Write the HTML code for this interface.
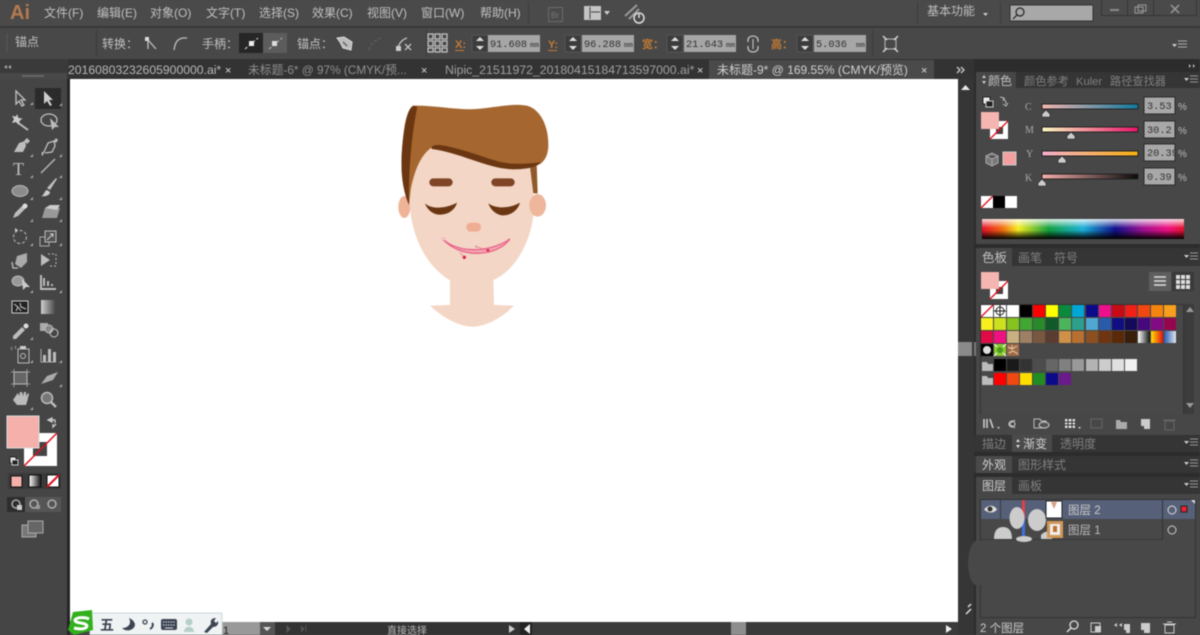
<!DOCTYPE html>
<html><head><meta charset="utf-8">
<style>
html,body{margin:0;padding:0;width:1200px;height:635px;overflow:hidden;background:#464646}
svg{display:block;filter:blur(.4px)}
text{font-family:"Liberation Sans","Noto Sans CJK SC",sans-serif;font-size:12px;fill:#c0c0c0}
.m{font-family:"Liberation Mono","Noto Sans CJK SC",monospace;font-size:10.300px;fill:#333}
.o{fill:#c07a34;font-size:11px;font-weight:bold}
.d{fill:#808080;font-size:11.200px}
.i{fill:none;stroke:#c0c0c0;stroke-width:1.300}
.f{fill:#bdbdbd}
.s{width:12px;height:12px}
</style></head><body>
<svg width="1200" height="635" viewBox="0 0 1200 635" xmlns="http://www.w3.org/2000/svg">
<defs>
<linearGradient id="gc"><stop offset="0" stop-color="#f5b5b0"/><stop offset="1" stop-color="#0f7a9e"/></linearGradient>
<linearGradient id="gm"><stop offset="0" stop-color="#fafac0"/><stop offset="1" stop-color="#e8146a"/></linearGradient>
<linearGradient id="gy"><stop offset="0" stop-color="#f5b0d0"/><stop offset="1" stop-color="#f8b010"/></linearGradient>
<linearGradient id="gk"><stop offset="0" stop-color="#f5b0ac"/><stop offset="1" stop-color="#0a0a0a"/></linearGradient>
<linearGradient id="sp"><stop offset="0" stop-color="#e8102a"/><stop offset=".1" stop-color="#f06a10"/><stop offset=".18" stop-color="#f5ec20"/><stop offset=".33" stop-color="#12a040"/><stop offset=".5" stop-color="#1ab0d8"/><stop offset=".66" stop-color="#10108c"/><stop offset=".8" stop-color="#a01090"/><stop offset=".92" stop-color="#ee1080"/><stop offset="1" stop-color="#e8102a"/></linearGradient>
<linearGradient id="sw" x2="0" y2="1"><stop offset="0" stop-color="#fff" stop-opacity=".85"/><stop offset=".45" stop-color="#fff" stop-opacity="0"/><stop offset=".55" stop-color="#000" stop-opacity="0"/><stop offset="1" stop-color="#000"/></linearGradient>
<linearGradient id="g1"><stop offset="0" stop-color="#fff"/><stop offset="1" stop-color="#111"/></linearGradient>
<linearGradient id="g2"><stop offset="0" stop-color="#ffe000"/><stop offset="1" stop-color="#e81010"/></linearGradient>
<linearGradient id="g3"><stop offset="0" stop-color="#2a5ab0"/><stop offset="1" stop-color="#e0e8f0"/></linearGradient>
</defs>

<!-- base regions -->
<rect width="1200" height="635" fill="#464646"/>
<rect x="0" y="0" width="1200" height="26" fill="#4a4a4a"/>
<rect x="0" y="26" width="1200" height="2" fill="#383838"/>
<rect x="0" y="28" width="1200" height="31" fill="#484848"/>
<rect x="0" y="59" width="1200" height="20" fill="#333"/>
<rect x="0" y="59" width="68" height="20" fill="#3a3a3a"/>
<rect x="0" y="79" width="67" height="556" fill="#454545"/>
<rect x="67" y="79" width="3" height="556" fill="#242424"/>
<rect x="958" y="79" width="16" height="556" fill="#333"/>
<rect x="974" y="59" width="226" height="576" fill="#2c2c2c"/>

<!-- canvas -->
<rect x="70" y="79" width="888" height="543" fill="#fff"/>

<!-- menu -->
<text x="10" y="19" style="font-size:20px;font-weight:bold;fill:#b57a4c">Ai</text>
<text x="44" y="17">文件(F)</text><text x="97" y="17">编辑(E)</text><text x="150" y="17">对象(O)</text><text x="206" y="17">文字(T)</text><text x="259" y="17">选择(S)</text><text x="312" y="17">效果(C)</text><text x="367" y="17">视图(V)</text><text x="421" y="17">窗口(W)</text><text x="480" y="17">帮助(H)</text>
<rect x="528" y="2" width="1" height="22" fill="#3c3c3c"/>
<rect x="548.500" y="7.500" width="14" height="14" fill="none" stroke="#6a6a6a"/>
<text x="551" y="18" style="font-size:8px;fill:#777">Br</text>
<rect x="584" y="6" width="17" height="14" fill="#c4c4c4"/><path d="M590 7v12M591 12h9" stroke="#444" fill="none"/><path d="M604 11h6l-3 4z" fill="#ccc"/>
<path d="M625 16l12-11M629 19l10-10" stroke="#999" stroke-width="2" fill="none"/><circle cx="639" cy="18" r="5" fill="none" stroke="#ddd" stroke-width="1.500"/><path d="M639 14v4" stroke="#ddd" stroke-width="1.500"/>
<rect x="917" y="2" width="1" height="22" fill="#3c3c3c"/><rect x="1000" y="2" width="1" height="22" fill="#3c3c3c"/>
<text x="927" y="15">基本功能</text><path d="M983 13h5l-2.500 3z" fill="#ccc"/>
<rect x="1010" y="5" width="83" height="16" fill="#a8a8a8" stroke="#333"/>
<circle cx="1020" cy="12" r="4" fill="none" stroke="#222" stroke-width="1.200"/><path d="M1017 15l-4 4" stroke="#222" stroke-width="1.200"/>
<path d="M1101.500 0v15.500h95V0M1127.500 0v15.500M1153.500 0v15.500" fill="none" stroke="#353535"/>
<rect x="1110" y="9" width="9" height="2" fill="#8a8a8a"/>
<rect x="1135" y="7" width="8" height="6" fill="none" stroke="#999"/><rect x="1138" y="5" width="8" height="6" fill="none" stroke="#999"/>
<path d="M1171 5l8 8M1179 5l-8 8" stroke="#999" stroke-width="1.500"/>

<!-- control bar -->
<path d="M7 34v18" stroke="#6a6a6a" stroke-dasharray="1 1"/>
<rect x="96" y="30" width="1" height="27" fill="#3a3a3a"/>
<text x="15" y="46">锚点</text>
<text x="102" y="48">转换：</text>
<rect x="145" y="37" width="4" height="4" fill="#ddd"/><path d="M149 41l7 8M148 41v8" class="i"/>
<path d="M174 50c1-7 3-11 9-12h4" class="i" stroke-width="2"/>
<text x="202" y="48">手柄：</text>
<rect x="239" y="33" width="24" height="20" fill="#262626"/><rect x="263" y="33" width="24" height="20" fill="#5c5c5c"/>
<path d="M245 49l13-11" stroke="#ddd" stroke-dasharray="3 2"/><rect x="249" y="41" width="5" height="5" fill="#eee"/>
<path d="M269 49l13-11" stroke="#bbb" stroke-dasharray="3 2"/><rect x="272" y="41" width="5" height="5" fill="#ddd"/>
<text x="297" y="48">锚点：</text>
<path d="M337 38l7-1 8 5-1 8-8-2-3-6z" fill="#bbb" stroke="#ddd"/><path d="M343 42l4 4" stroke="#444"/>
<path d="M369 50c2-6 6-10 12-12" fill="none" stroke="#666" stroke-dasharray="3 2"/>
<path d="M398 48c1-5 5-9 9-10" class="i"/><rect x="396" y="46" width="5" height="5" fill="#ccc"/><path d="M405 44l6 6M411 44l-6 6" class="i"/>
<rect x="426" y="30" width="1" height="27" fill="#3a3a3a"/>
<g class="i"><rect x="428" y="34" width="5" height="5"/><rect x="435" y="34" width="5" height="5"/><rect x="442" y="34" width="5" height="5"/><rect x="428" y="41" width="5" height="5"/><rect x="435" y="41" width="5" height="5"/><rect x="442" y="41" width="5" height="5"/><rect x="428" y="48" width="5" height="4"/><rect x="435" y="48" width="5" height="4"/><rect x="442" y="48" width="5" height="4"/></g>
<text x="455" y="48" class="o">X:</text><rect x="455" y="50" width="9" height="1" fill="#c07a34"/>
<rect x="472" y="35" width="16" height="17" fill="#3c3c3c" stroke="#555"/><path d="M476 41l4-4 4 4zM476 46l4 4 4-4z" fill="#ddd"/>
<rect x="488" y="35" width="52" height="17" fill="#a6a6a6"/><text x="490" y="47" class="m">91.608</text><text x="530" y="47" class="m" style="font-size:7.500px">mm</text>
<text x="548" y="48" class="o">Y:</text><rect x="548" y="50" width="9" height="1" fill="#c07a34"/>
<rect x="565" y="35" width="16" height="17" fill="#3c3c3c" stroke="#555"/><path d="M569 41l4-4 4 4zM569 46l4 4 4-4z" fill="#ddd"/>
<rect x="582" y="35" width="52" height="17" fill="#a6a6a6"/><text x="584" y="47" class="m">96.288</text><text x="624" y="47" class="m" style="font-size:7.500px">mm</text>
<text x="642" y="48" class="o">宽：</text>
<rect x="667" y="35" width="16" height="17" fill="#3c3c3c" stroke="#555"/><path d="M671 41l4-4 4 4zM671 46l4 4 4-4z" fill="#ddd"/>
<rect x="684" y="35" width="52" height="17" fill="#a6a6a6"/><text x="686" y="47" class="m">21.643</text><text x="726" y="47" class="m" style="font-size:7.500px">mm</text>
<path d="M748 42v-2a5 4 0 0 1 10 0v2M748 46v2a5 4 0 0 0 10 0v-2" class="i" stroke-width="1.700"/><path d="M753 39v10" stroke="#ccc"/>
<text x="771" y="48" class="o">高：</text>
<rect x="797" y="35" width="16" height="17" fill="#3c3c3c" stroke="#555"/><path d="M801 41l4-4 4 4zM801 46l4 4 4-4z" fill="#ddd"/>
<rect x="814" y="35" width="52" height="17" fill="#a6a6a6"/><text x="816" y="47" class="m">5.036</text><text x="856" y="47" class="m" style="font-size:7.500px">mm</text>
<rect x="872" y="30" width="1" height="27" fill="#3a3a3a"/>
<rect x="885" y="39" width="11" height="10" fill="none" stroke="#bbb"/><path d="M883 36l4 4M898 36l-4 4M883 52l4-4M898 52l-4-4" stroke="#ddd" stroke-width="1.300"/>
<path d="M1172 44h5l-2.500 3z" fill="#ccc"/><path d="M1178 41h9M1178 44h9M1178 47h9" stroke="#aaa"/>

<!-- tabs -->
<path d="M7 65l-3 2 3 2zM11 65l-3 2 3 2z" fill="#aaa"/>
<rect x="0" y="73" width="67" height="6" fill="#484848"/><rect x="22" y="75" width="22" height="2" fill="#666"/>
<text x="68" y="74" style="font-size:12.200px;fill:#b8b8b8">20160803232605900000.ai*</text><text x="225" y="74" style="font-size:11px;fill:#ddd">×</text>
<text x="248" y="74" style="font-size:11.800px;fill:#909090">未标题-6* @ 97% (CMYK/预...</text><text x="421" y="74" style="font-size:11px;fill:#ddd">×</text>
<text x="445" y="74" style="font-size:12.300px;fill:#a0a0a0">Nipic_21511972_20180415184713597000.ai*</text><text x="697" y="74" style="font-size:11px;fill:#ddd">×</text>
<rect x="709" y="60" width="225" height="19" fill="#4a4a4a"/>
<text x="717" y="74" style="font-size:12px;fill:#d0d0d0">未标题-9* @ 169.55% (CMYK/预览)</text><text x="921" y="74" style="font-size:11px;fill:#ddd">×</text>
<path d="M957 67l3 3-3 3M961 67l3 3-3 3" fill="none" stroke="#ccc" stroke-width="1.300"/>
<path d="M1189 64l2 2-2 2zM1193 64l2 2-2 2z" fill="#bbb"/>

<!-- toolbar icons -->
<rect x="35" y="88" width="26" height="21" fill="#2b2b2b"/>
<path d="M16 91v13l3-3 3 5 2-1-3-5h4z" class="i"/>
<path d="M44 91v13l3-3 3 5 2-1-3-5h4z" fill="#ccc"/>
<path d="M17 122l11 8" stroke="#bbb" stroke-width="2"/><path d="M17 114l1.500 4 4 .5-3 2.500-.5 4-3-3-4 1 2-4-2-3 4 .5z" fill="#ccc"/>
<ellipse cx="49" cy="120" rx="8" ry="6" class="i" stroke-width="2"/><path d="M50 118l2 12 3-3 4 0z" fill="#bbb"/>
<path d="M14 152l5-9 6-2 1 5-3 6z" class="f"/><path d="M24 141l3-3 3 3-3 3z" class="f"/>
<path d="M42 152c2 4-2 4 2 0l4-9 6-2 1 5-3 6-7 1" class="i"/><path d="M54 141l2-3 2 2-2 3z" class="f"/>
<text x="13" y="175" style="font-family:'Liberation Serif',serif;font-size:18px;fill:#c0c0c0">T</text>
<path d="M41 173l14-14" stroke="#bbb" stroke-width="1.300"/>
<ellipse cx="20" cy="191" rx="8" ry="5.500" fill="#8c8c8c" stroke="#bbb"/>
<path d="M47 188l9-10 1 1-7 11z" class="f"/><path d="M41 196c3 0 3-5 6-6l3 2c0 3-4 5-9 4z" fill="#ccc"/>
<path d="M13 218l2-5 9-9 3 3-9 9z" class="f"/><circle cx="25" cy="206" r="2.500" fill="#ddd"/>
<path d="M42 218l3-10h9l6 0-3 10z" fill="#999"/><path d="M45 208l5-3 10 0-3 5" fill="#ccc"/>
<circle cx="20" cy="237" r="6.500" fill="none" stroke="#bbb" stroke-dasharray="3 2"/><path d="M15 232l3-2-3-2z" fill="#ccc"/>
<rect x="40" y="237" width="9" height="9" fill="none" stroke="#aaa"/><rect x="45" y="231" width="11" height="11" fill="#555" stroke="#bbb"/><path d="M47 240l6-6M50 234h3v3" stroke="#ccc" fill="none"/>
<path d="M17 256l10-3 0 9-6 6-6-4z" fill="#aaa"/><path d="M12 262l1 6 5 0" class="i"/>
<path d="M41 254l9 6-9 6z" class="f"/><path d="M48 254h8v12h-8" fill="none" stroke="#bbb" stroke-dasharray="2 2"/>
<ellipse cx="18" cy="281" rx="6" ry="5" fill="#999" stroke="#bbb"/><path d="M22 279l1 11 3-3 4 0z" fill="#ccc"/>
<path d="M41 275v14h15M44 278v8M48 281v5M52 284v2" stroke="#bbb" stroke-width="2" fill="none"/>
<rect x="12" y="301" width="16" height="12" fill="#222" stroke="#ccc"/><path d="M14 304l4 3-2 4M20 303l1 4 5 2M18 307l3 4" stroke="#ccc" fill="none"/>
<rect x="41" y="300" width="15" height="14" fill="#888"/><rect x="41" y="300" width="15" height="14" fill="url(#g1)" opacity=".6"/>
<path d="M13 336l9-9 3 3-9 9-3 0z" class="f"/><circle cx="26" cy="326" r="2.500" fill="#ddd"/>
<rect x="40" y="323" width="8" height="8" fill="#aaa"/><circle cx="49" cy="329" r="4" fill="#888" stroke="#bbb"/><circle cx="54" cy="333" r="4" fill="none" stroke="#ccc"/>
<path d="M12 347a2 2 0 0 0 0 3M16 346a2 2 0 0 0 0 3" stroke="#999" fill="none"/><rect x="18" y="349" width="11" height="14" fill="none" stroke="#bbb"/><circle cx="23" cy="356" r="2.500" fill="none" stroke="#bbb"/><rect x="20" y="346" width="6" height="3" fill="#ccc"/>
<path d="M41 349v13h15" stroke="#aaa" fill="none"/><rect x="43" y="355" width="3" height="7" fill="#bbb"/><rect x="48" y="349" width="3" height="13" fill="#bbb"/><rect x="53" y="352" width="3" height="10" fill="#bbb"/>
<rect x="14" y="372" width="13" height="12" fill="#666" stroke="#bbb"/><path d="M14 369v3M27 369v3M14 384v3M27 384v3M11 372h3M27 372h3M11 384h3M27 384h3" stroke="#999"/>
<path d="M41 384l6-8 11-4-5 8-9 3z" fill="#aaa"/>
<path d="M13 400l4-6 1-1 1 3 1-4 2 0 1 4 1-4 2 0 0 4 2-3 1 1-2 8-1 3h-9z" fill="#bbb"/>
<circle cx="47" cy="398" r="5.500" fill="#777" stroke="#bbb" stroke-width="1.500"/><path d="M51 402l5 5" stroke="#bbb" stroke-width="2.500"/>
<g fill="#eee"><path d="M30 105h3v-3zM59 106h3v-3zM30 157h3v-3zM59 157h3v-3zM30 178h3v-3zM59 178h3v-3zM30 200h3v-3zM59 200h3v-3zM30 222h3v-3zM59 222h3v-3zM30 246h3v-3zM59 246h3v-3zM30 293h3v-3zM59 293h3v-3zM30 340h3v-3zM30 363h3v-3zM59 363h3v-3zM59 387h3v-3zM30 410h3v-3z" opacity=".6"/></g>
<!-- colour widgets -->
<rect x="24" y="433" width="33" height="33" fill="#fff"/><rect x="33" y="442" width="14" height="14" fill="#444"/>
<path d="M24 466l33-33" stroke="#e01020" stroke-width="1.500"/>
<rect x="7" y="416" width="32" height="32" fill="#f5b0ab" stroke="#ddd"/>
<path d="M48 420l4-2 0 4zM56 424l-3 3 0-3M49 420h6v3" fill="none" stroke="#ccc" stroke-width="1.300"/>
<rect x="10" y="457" width="6" height="6" fill="#eee" stroke="#222"/><rect x="12" y="460" width="6" height="5" fill="#222" stroke="#ccc"/>
<rect x="8" y="473" width="53" height="16" fill="#3a3a3a"/>
<rect x="11" y="476" width="11" height="11" fill="#f5b0ab" stroke="#111"/>
<rect x="29" y="475" width="12" height="12" fill="url(#g1)" stroke="#111"/>
<rect x="47" y="475" width="12" height="12" fill="#fff" stroke="#111"/><path d="M47 487l12-12" stroke="#e01020" stroke-width="2"/>
<rect x="7" y="497" width="18" height="15" fill="#2d2d2d"/><rect x="25" y="497" width="36" height="15" fill="#555"/>
<g fill="none" stroke="#bbb" stroke-width="1.300"><circle cx="16" cy="504" r="4"/><circle cx="34" cy="504" r="4"/><circle cx="52" cy="504" r="4"/></g><rect x="17" y="505" width="5" height="5" fill="#ccc"/><rect x="36" y="505" width="4" height="4" fill="#999"/>
<rect x="22" y="525" width="14" height="12" fill="#777" stroke="#aaa"/><rect x="28" y="521" width="15" height="12" fill="#666" stroke="#aaa"/>

<!-- face -->
<svg x="380" y="95" width="180" height="240" viewBox="0 0 540 720">
<ellipse cx="73" cy="336" rx="18" ry="33" fill="#efb398"/>
<path d="M88 300C88 400 125 505 210 556L210 630L150 632C190 670 240 695 275 695C320 695 370 665 402 632L342 630L340 555C410 525 458 430 462 340L455 200L150 140L100 200Z" fill="#f4d6c6"/>
<ellipse cx="473" cy="331" rx="25" ry="34" fill="#eeb79b"/>
<path d="M450 215L470 205L473 295L460 295Z" fill="#8f5a2a"/>
<path d="M100 32C160 30 230 46 290 42C340 38 400 24 440 32C480 42 505 90 505 150C505 185 490 205 470 212L400 222C320 215 240 170 160 155C130 170 105 215 92 285L87 330C70 290 62 240 65 180C70 100 80 45 100 32Z" fill="#a5672f"/>
<path d="M100 32C80 42 70 100 65 180C62 240 70 290 87 330C85 250 92 130 112 36Z" fill="#6b3712"/>
<path d="M155 155C165 146 190 150 220 158C300 178 350 205 400 206C430 207 465 205 482 201C472 216 440 223 400 223C320 221 240 172 155 162Z" fill="#6b3712"/>
<rect x="148" y="250" width="70" height="24" rx="12" fill="#7f4526"/>
<rect x="334" y="250" width="70" height="24" rx="12" fill="#7f4526"/>
<path d="M135 325C150 340 190 345 231 323C225 345 205 359 180 359C160 359 142 345 135 325Z" fill="#6b3712"/>
<path d="M325 325C345 340 385 343 420 323C414 345 395 361 370 361C350 361 332 345 325 325Z" fill="#6b3712"/>
<rect x="259" y="383" width="44" height="27" rx="13" fill="#eeae94"/>
<path d="M188 432C225 468 310 480 388 434C350 486 240 492 188 432Z" fill="#f2a4b2" stroke="#e8688a" stroke-width="4"/>
<path d="M240 472L252 487M322 466L290 455" stroke="#e8688a" stroke-width="2"/>
<circle cx="253" cy="487" r="5" fill="#d8283e"/><circle cx="324" cy="466" r="4" fill="#d8283e"/><circle cx="289" cy="455" r="4" fill="#d0a8a8"/>
<rect x="186" y="428" width="8" height="8" fill="#f8d8d8" stroke="#e8688a"/><circle cx="387" cy="434" r="3.500" fill="#e8688a"/>
</svg>

<!-- scrollbars -->
<rect x="958" y="79" width="16" height="556" fill="#363636"/>
<path d="M961 90l4.500-5 4.500 5z" fill="#e8e8e8"/>
<rect x="958" y="342" width="14" height="14" fill="#8a8a8a"/>
<rect x="220" y="622" width="738" height="13" fill="#333"/>
<rect x="222" y="622" width="38" height="13" fill="#999"/><text x="223" y="634" style="font-size:11px;fill:#222">1</text>
<rect x="260" y="622" width="15" height="13" fill="#555"/><path d="M263 627h8l-4 4z" fill="#ddd"/>
<path d="M287 626l3 3-3 3zM301 626l3 3-3 3M306 625v7" fill="#555" stroke="#555"/>
<text x="387" y="634" style="font-size:10px;fill:#b8b8b8">直接选择</text>
<path d="M509 625l6 4-6 4z" fill="#ccc"/>
<rect x="520" y="622" width="438" height="13" fill="#3a3a3a"/><rect x="520" y="622" width="12" height="13" fill="#222"/>
<path d="M530 624l-6 5 6 5z" fill="#eee"/>
<rect x="731" y="622" width="15" height="13" fill="#8e8e8e"/>
<path d="M946 625l6 4-6 4z" fill="#eee"/>
<path d="M966 614l5-5M968 607l3-3" stroke="#ddd" stroke-width="1.500"/>

<!-- IME bar -->
<rect x="90" y="613" width="132" height="22" fill="#f0f3f4" stroke="#cdd8d8"/>
<path d="M73 612L92 610L93 630L74 635L68 630Z" fill="#33b01e"/>
<path d="M89 619c-4-2-12-2-14 1 0 4 11 2 12 6-1 4-9 3-13 2" fill="none" stroke="#fff" stroke-width="3"/>
<text x="100" y="630" style="font-size:14px;fill:#3d4552;font-weight:bold">五</text>
<path d="M129 618c3 6-1 10-7 10c3 4 12 3 13-3c0-3-3-6-6-7z" fill="#3d4552"/>
<circle cx="145" cy="622" r="2" fill="none" stroke="#3d4552" stroke-width="1.300"/><path d="M152 623c2 2 0 5-2 6" stroke="#3d4552" stroke-width="2" fill="none"/>
<rect x="161" y="619" width="16" height="11" rx="2" fill="#3d4552"/><path d="M163 622h12M163 625h12" stroke="#dde" stroke-dasharray="1.500 1"/><path d="M165 628h8" stroke="#dde"/>
<circle cx="189" cy="622" r="3.500" fill="#b5d0c8"/><path d="M184 632c0-7 10-7 10 0z" fill="#b5d0c8"/>
<path d="M204 632l7-8c-1-4 1-6 5-6l-2 3 2 2 2-2c1 4-2 6-5 6l-6 6z" fill="#3d4552"/>

<!-- panels -->
<rect x="976" y="72" width="224" height="172" fill="#474747"/>
<rect x="976" y="72" width="224" height="16" fill="#353535"/>
<rect x="976" y="72" width="40" height="17" fill="#474747"/>
<path d="M982 78l2-3 2 3zM982 81l2 3 2-3z" fill="#ccc"/>
<text x="988" y="85">颜色</text><text x="1024" y="85" class="d">颜色参考</text><text x="1076" y="85" class="d">Kuler</text><text x="1110" y="85" class="d">路径查找器</text>
<path d="M1184 78h5l-2.500 3z" fill="#ccc"/><path d="M1190 76h8M1190 79h8M1190 82h8" stroke="#999"/>
<rect x="983" y="97" width="7" height="7" fill="#eee" stroke="#222"/><rect x="986" y="101" width="7" height="6" fill="#222" stroke="#ccc"/>
<path d="M1000 97l4 1-1 3M1003 98c2 2 3 3 3 6M1003 104l3 2 2-3" fill="none" stroke="#bbb"/>
<rect x="990" y="121" width="18" height="18" fill="#fff"/><rect x="996" y="127" width="7" height="7" fill="#444"/><path d="M990 139l18-18" stroke="#e01020" stroke-width="1.300"/>
<rect x="981" y="112" width="18" height="17" fill="#f5b5b0"/>
<path d="M986 156l6-3 6 3v7l-6 3-6-3zM986 156l6 3 6-3M992 159v7" fill="#777" stroke="#aaa"/>
<rect x="1003" y="152" width="13" height="13" fill="#f4a0a0" stroke="#ccc"/>
<text x="1025" y="110" style="font-size:10px;font-family:'Liberation Serif',serif;fill:#aaa">C</text><text x="1025" y="133" style="font-size:10px;font-family:'Liberation Serif',serif;fill:#aaa">M</text><text x="1026" y="157" style="font-size:10px;font-family:'Liberation Serif',serif;fill:#aaa">Y</text><text x="1025" y="181" style="font-size:10px;font-family:'Liberation Serif',serif;fill:#aaa">K</text>
<rect x="1042" y="104" width="96" height="5" fill="url(#gc)" stroke="#222"/>
<rect x="1042" y="127" width="96" height="5" fill="url(#gm)" stroke="#222"/>
<rect x="1042" y="151" width="96" height="5" fill="url(#gy)" stroke="#222"/>
<rect x="1042" y="174" width="96" height="5" fill="url(#gk)" stroke="#222"/>
<path d="M1042 114l4-4 4 4v3h-8zM1067 136l4-4 4 4v3h-8zM1058 160l4-4 4 4v3h-8zM1038 183l4-4 4 4v3h-8z" fill="#ccc" stroke="#222" stroke-width=".6"/>
<g fill="#a8a8a8" stroke="#2a2a2a"><rect x="1144" y="97" width="31" height="17"/><rect x="1144" y="121" width="31" height="17"/><rect x="1144" y="144" width="31" height="17"/><rect x="1144" y="168" width="31" height="17"/></g>
<text x="1147" y="109" class="m">3.53</text><text x="1147" y="133" class="m">30.2</text><text x="1147" y="156" class="m">20.39</text><text x="1147" y="180" class="m">0.39</text>
<rect x="1175.500" y="143" width="3" height="19" fill="#474747"/>
<text x="1178" y="110" style="font-size:10px;fill:#bbb">%</text><text x="1178" y="134" style="font-size:10px;fill:#bbb">%</text><text x="1178" y="157" style="font-size:10px;fill:#bbb">%</text><text x="1178" y="181" style="font-size:10px;fill:#bbb">%</text>
<rect x="981" y="196" width="12" height="12" fill="#fff"/><path d="M981 208l12-12" stroke="#e01020" stroke-width="1.300"/>
<rect x="993" y="196" width="12" height="12" fill="#000"/><rect x="1005" y="196" width="12" height="12" fill="#fff"/>
<rect x="982" y="219" width="202" height="20" fill="url(#sp)"/><rect x="982" y="219" width="202" height="20" fill="url(#sw)"/>

<!-- swatches panel -->
<rect x="976" y="248" width="224" height="187" fill="#474747"/>
<rect x="976" y="248" width="224" height="18" fill="#353535"/>
<rect x="976" y="248" width="36" height="19" fill="#474747"/>
<text x="982" y="262" style="font-size:12.500px">色板</text><text x="1018" y="262" class="d" style="font-size:12px">画笔</text><text x="1054" y="262" class="d" style="font-size:12px">符号</text>
<path d="M1184 255h5l-2.500 3z" fill="#ccc"/><path d="M1190 253h8M1190 256h8M1190 259h8" stroke="#999"/>
<rect x="990" y="281" width="18" height="18" fill="#fff"/><rect x="996" y="287" width="7" height="7" fill="#444"/><path d="M990 299l18-18" stroke="#e01020" stroke-width="1.300"/>
<rect x="981" y="272" width="18" height="17" fill="#f5b5b0"/>
<rect x="1149" y="272" width="22" height="19" fill="#5e5e5e"/><path d="M1154 277h12M1154 281h12M1154 285h12" stroke="#ddd" stroke-width="1.500"/>
<rect x="1172" y="272" width="22" height="19" fill="#3a3a3a"/><g fill="#ddd"><rect x="1176" y="275" width="4" height="4"/><rect x="1181" y="275" width="4" height="4"/><rect x="1186" y="275" width="4" height="4"/><rect x="1176" y="280" width="4" height="4"/><rect x="1181" y="280" width="4" height="4"/><rect x="1186" y="280" width="4" height="4"/><rect x="1176" y="285" width="4" height="4"/><rect x="1181" y="285" width="4" height="4"/><rect x="1186" y="285" width="4" height="4"/></g>
<rect x="980.500" y="304.500" width="203" height="124" fill="#484848" stroke="#333"/>
<rect x="1184" y="304" width="10" height="124" fill="#3c3c3c"/>
<path d="M1186 312l4-5 4 5zM1186 403l4 5 4-5z" fill="#999"/>
<g transform="translate(0,305)">
<rect class="s" x="981" fill="#fff"/><rect class="s" x="994" fill="#fff"/><rect class="s" x="1007" fill="#fff"/><rect class="s" x="1020" fill="#000"/><rect class="s" x="1033" fill="#f00"/><rect class="s" x="1046" fill="#ff0"/><rect class="s" x="1059" fill="#0a8a3c"/><rect class="s" x="1072" fill="#00a6d6"/><rect class="s" x="1086" fill="#0a0a8a"/><rect class="s" x="1099" fill="#ee0f8c"/><rect class="s" x="1112" fill="#c80a14"/><rect class="s" x="1125" fill="#ee2018"/><rect class="s" x="1138" fill="#f04810"/><rect class="s" x="1151" fill="#f5840f"/><rect class="s" x="1164" fill="#f8a01e"/>
<path d="M981 12l12-12" stroke="#e01020" stroke-width="1.300"/><circle cx="1000" cy="6" r="4" fill="none" stroke="#222"/><path d="M994 6h12M1000 0v12" stroke="#222"/>
</g>
<g transform="translate(0,318)">
<rect class="s" x="981" fill="#f5f01e"/><rect class="s" x="994" fill="#cde01e"/><rect class="s" x="1007" fill="#85c31e"/><rect class="s" x="1020" fill="#40a832"/><rect class="s" x="1033" fill="#288a2a"/><rect class="s" x="1046" fill="#0f5a28"/><rect class="s" x="1059" fill="#4cb45a"/><rect class="s" x="1072" fill="#2ca08c"/><rect class="s" x="1086" fill="#50a8d2"/><rect class="s" x="1099" fill="#2a5aaa"/><rect class="s" x="1112" fill="#0f0f82"/><rect class="s" x="1125" fill="#140a5a"/><rect class="s" x="1138" fill="#46087e"/><rect class="s" x="1151" fill="#820a82"/><rect class="s" x="1164" fill="#96064e"/>
</g>
<g transform="translate(0,331)">
<rect class="s" x="981" fill="#e00a46"/><rect class="s" x="994" fill="#ef1182"/><rect class="s" x="1007" fill="#c8b080"/><rect class="s" x="1020" fill="#a08064"/><rect class="s" x="1033" fill="#7a5840"/><rect class="s" x="1046" fill="#5a3c30"/><rect class="s" x="1059" fill="#cf9048"/><rect class="s" x="1072" fill="#b87030"/><rect class="s" x="1086" fill="#8c5020"/><rect class="s" x="1099" fill="#703410"/><rect class="s" x="1112" fill="#5a2a08"/><rect class="s" x="1125" fill="#3a1e0c"/><rect class="s" x="1138" fill="url(#g1)"/><rect class="s" x="1151" fill="url(#g2)"/><rect class="s" x="1164" fill="url(#g3)"/>
</g>
<g transform="translate(0,344)">
<rect class="s" x="981" fill="#000"/><circle cx="987" cy="6" r="4" fill="#ddd"/>
<rect class="s" x="994" fill="#8ac832"/><circle cx="1000" cy="6" r="3" fill="#4a9a20"/><path d="M994 0l3 3M1006 0l-3 3M994 12l3-3M1006 12l-3-3" stroke="#fff"/>
<rect class="s" x="1007" fill="#a06a48"/><path d="M1008 3l4 2 5-3M1009 9l4-2 5 3M1012 1v4" stroke="#e8d0b0" fill="none"/>
</g>
<g transform="translate(0,359)">
<path d="M982 3h5l1 2h5v7h-11z" fill="#bbb"/>
<rect class="s" x="994" fill="#000"/><rect class="s" x="1007" fill="#1a1a1a"/><rect class="s" x="1020" fill="#333"/><rect class="s" x="1033" fill="#4d4d4d"/><rect class="s" x="1046" fill="#666"/><rect class="s" x="1059" fill="#808080"/><rect class="s" x="1072" fill="#999"/><rect class="s" x="1086" fill="#b3b3b3"/><rect class="s" x="1099" fill="#ccc"/><rect class="s" x="1112" fill="#e0e0e0"/><rect class="s" x="1125" fill="#f0f0f0"/>
</g>
<g transform="translate(0,373)">
<path d="M982 3h5l1 2h5v7h-11z" fill="#bbb"/>
<rect class="s" x="994" fill="#f00"/><rect class="s" x="1007" fill="#f04810"/><rect class="s" x="1020" fill="#ffdd00"/><rect class="s" x="1033" fill="#228b22"/><rect class="s" x="1046" fill="#0a0a8a"/><rect class="s" x="1059" fill="#6a1a8a"/>
</g>
<rect x="974" y="342" width="2" height="14" fill="#777"/>
<!-- swatch footer icons -->
<rect x="976" y="414" width="224" height="21" fill="#474747"/>
<path d="M984 419v9M987 419v9M990 419l3 9" stroke="#ccc" stroke-width="1.600"/><path d="M997 427h3l-1.500 2z" fill="#ccc"/>
<circle cx="1012" cy="424" r="3" fill="none" stroke="#ccc"/><path d="M1015 420l-6 4 6 4" fill="none" stroke="#ccc"/>
<path d="M1034 419h6l1 2h5v7h-12z" fill="none" stroke="#bbb"/><ellipse cx="1044" cy="425" rx="5" ry="3" fill="#555" stroke="#ccc"/>
<rect x="1065" y="419" width="10" height="9" fill="#ddd"/><path d="M1065 422h10M1065 425h10M1068 419v9M1072 419v9" stroke="#333"/><path d="M1078 427h3l-1.500 2z" fill="#ccc"/>
<rect x="1091" y="419" width="11" height="9" fill="none" stroke="#666"/>
<path d="M1116 420h4l1 2h6v7h-11z" fill="#aaa"/>
<path d="M1141 419h9v10h-6v-3h-3z" fill="#ccc"/>
<rect x="1165" y="421" width="9" height="9" fill="none" stroke="#666"/><path d="M1163 420h13" stroke="#666"/>

<!-- stroke/gradient tabs -->
<rect x="974" y="435" width="226" height="17" fill="#353535"/>
<rect x="1012" y="435" width="40" height="17" fill="#4a4a4a"/>
<text x="982" y="448" class="d" style="font-size:12px">描边</text><path d="M1016 442l2-3 2 3zM1016 445l2 3 2-3z" fill="#ddd"/><text x="1023" y="448" style="fill:#d0d0d0">渐变</text><text x="1060" y="448" class="d" style="font-size:12px">透明度</text>
<path d="M1184 441h5l-2.500 3z" fill="#ccc"/><path d="M1190 439h8M1190 442h8M1190 445h8" stroke="#999"/>
<rect x="974" y="456" width="226" height="17" fill="#353535"/>
<rect x="976" y="456" width="36" height="17" fill="#4a4a4a"/>
<text x="982" y="469" style="fill:#d0d0d0">外观</text><text x="1018" y="469" class="d" style="font-size:12px">图形样式</text>
<path d="M1184 462h5l-2.500 3z" fill="#ccc"/><path d="M1190 460h8M1190 463h8M1190 466h8" stroke="#999"/>
<!-- layers -->
<rect x="976" y="477" width="224" height="158" fill="#474747"/>
<rect x="976" y="477" width="224" height="17" fill="#353535"/>
<rect x="976" y="477" width="36" height="18" fill="#474747"/>
<text x="982" y="490" style="fill:#d0d0d0">图层</text><text x="1018" y="490" class="d" style="font-size:12px">画板</text>
<path d="M1184 483h5l-2.500 3z" fill="#ccc"/><path d="M1190 481h8M1190 484h8M1190 487h8" stroke="#999"/>
<rect x="980.500" y="499.500" width="215" height="118" fill="#484848" stroke="#333"/>
<rect x="981" y="500" width="214" height="19" fill="#566078"/>
<rect x="1000" y="500" width="1" height="19" fill="#3a3a3a"/><rect x="1162" y="500" width="1" height="39" fill="#333"/>
<rect x="981" y="539" width="182" height="1" fill="#3a3a3a"/>
<path d="M984 509.500c4-5 10-5 13 0-3 4-9 4-13 0z" fill="#ddd"/><circle cx="990" cy="509" r="2.500" fill="#333"/>
<rect x="1022" y="500" width="3" height="19" fill="#e04048"/><rect x="1022" y="519" width="3" height="17" fill="#4070e0"/>
<ellipse cx="1017" cy="518" rx="7.500" ry="11" fill="#ccc"/><ellipse cx="1037" cy="520" rx="9" ry="11" fill="#ccc"/>
<path d="M994 539c0-8 3-12 9-12 6 0 9 4 9 12z" fill="#ccc"/><ellipse cx="1024" cy="539" rx="8" ry="3" fill="#ccc"/><path d="M1041 535c3-4 8-4 11-3v7h-11z" fill="#ccc"/>
<rect x="1046" y="501" width="16" height="17" fill="#fff" stroke="#222"/><path d="M1051 502l3 7 3-7z" fill="#d8a080"/>
<rect x="1047" y="521" width="16" height="17" fill="#d09858"/><rect x="1050" y="524" width="10" height="11" fill="#eee"/><path d="M1053 526h4v6h-4z" fill="#c07030"/>
<text x="1068" y="514" style="font-size:11.500px;fill:#ccc">图层  2</text><text x="1068" y="534" style="font-size:11.500px;fill:#bbb">图层  1</text>
<circle cx="1172" cy="510" r="4" fill="none" stroke="#ddd"/><rect x="1181" y="506" width="6" height="6" fill="#ee2030" stroke="#222"/>
<path d="M1191 500h4v4z" fill="#ddd"/>
<circle cx="1172" cy="530" r="4" fill="none" stroke="#ccc"/>
<ellipse cx="978" cy="563" rx="10" ry="23" fill="#484848"/>
<text x="980" y="632" style="font-size:11.500px;fill:#ccc">2 个图层</text>
<circle cx="1074" cy="625" r="4" fill="none" stroke="#ddd" stroke-width="1.300"/><path d="M1071 628l-4 4" stroke="#ddd" stroke-width="1.500"/>
<rect x="1091" y="623" width="9" height="9" fill="none" stroke="#ccc"/><rect x="1095" y="626" width="6" height="6" fill="#ccc"/>
<path d="M1114 625l3-2v4zM1119 625l3 2v-4" fill="#ccc"/><path d="M1124 624h6v9h-4v-3h-2z" fill="#ccc"/>
<path d="M1141 623h9v10h-6v-3h-3z" fill="#ccc"/>
<rect x="1165" y="625" width="9" height="8" fill="none" stroke="#ccc"/><path d="M1163 624h13M1167 622h5" stroke="#ccc"/>
</svg>
</body></html>
